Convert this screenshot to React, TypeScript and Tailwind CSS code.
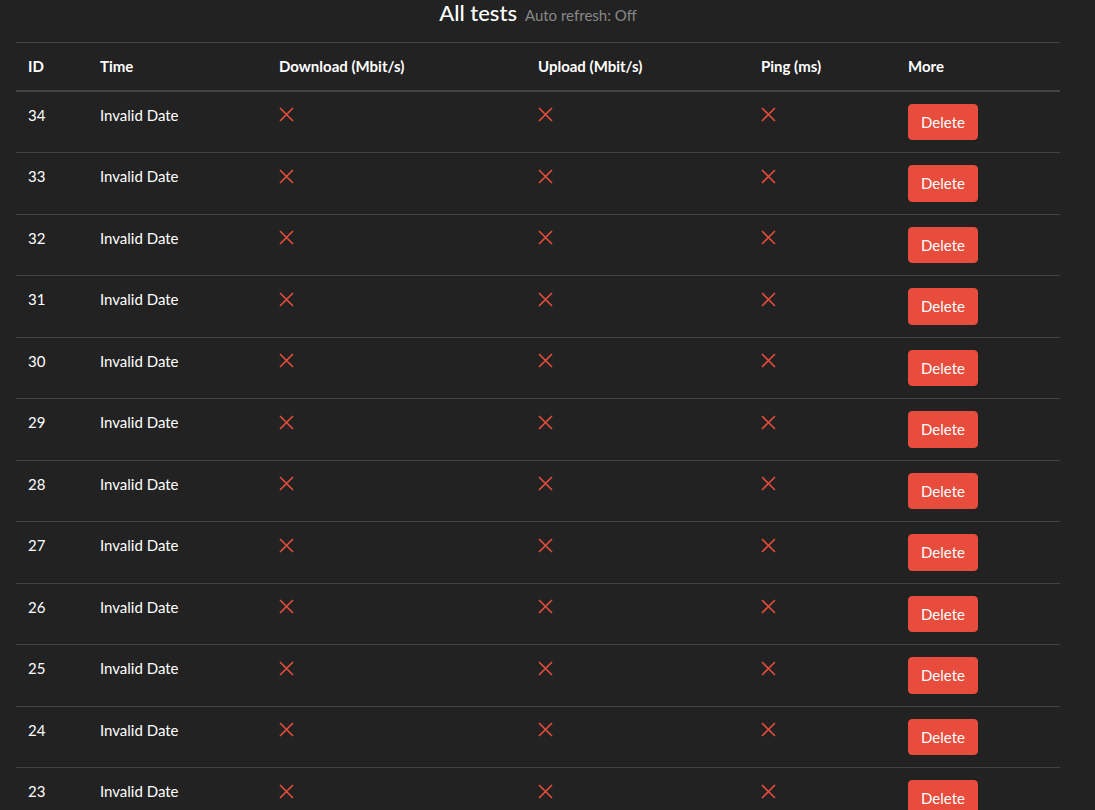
const rows = [34, 33, 32, 31, 30, 29, 28, 27, 26, 25, 24, 23, 22, 21];

const Cross = () => (
  <div className="flex h-[22px] items-center">
    <svg width="15" height="15" viewBox="0 0 15 15" className="block">
      <path d="M1 1L14 14M14 1L1 14" stroke="#e74c3c" strokeWidth="1.6" />
    </svg>
  </div>
);

export default function App() {
  return (
    <div className="min-h-screen bg-[#222222] text-white" style={{ fontFamily: "Lato, 'Open Sans', sans-serif" }}>
      <div className="mx-4 w-[1044px] overflow-hidden">
        <h4 className="mb-4 flex items-baseline justify-center gap-2 leading-[1.2]">
          <span className="text-[22px] font-medium">All tests</span>
          <span className="text-[15px] text-[#888888]">Auto refresh: Off</span>
        </h4>
        <table className="w-full border-collapse text-[15px] leading-[1.5]">
          <thead>
            <tr className="border-t border-b-2 border-t-[#444444] border-b-[#444444] text-left font-bold">
              <th className="w-[72px] p-3 align-top">ID</th>
              <th className="w-[179px] p-3 align-top">Time</th>
              <th className="w-[259px] p-3 align-top">Download (Mbit/s)</th>
              <th className="w-[223px] p-3 align-top">Upload (Mbit/s)</th>
              <th className="w-[147px] p-3 align-top">Ping (ms)</th>
              <th className="p-3 align-top">More</th>
            </tr>
          </thead>
          <tbody>
            {rows.map((id) => (
              <tr key={id} className="border-t border-[#444444] first:border-t-0">
                <td className="p-3 align-top">{id}</td>
                <td className="p-3 align-top">Invalid Date</td>
                <td className="p-3 align-top"><Cross /></td>
                <td className="p-3 align-top"><Cross /></td>
                <td className="p-3 align-top"><Cross /></td>
                <td className="p-3 align-top">
                  <button className="block rounded-[4px] border border-[#e74c3c] bg-[#e74c3c] px-3 py-1.5 text-[15px] leading-[1.5] text-white">
                    Delete
                  </button>
                </td>
              </tr>
            ))}
          </tbody>
        </table>
      </div>
    </div>
  );
}
